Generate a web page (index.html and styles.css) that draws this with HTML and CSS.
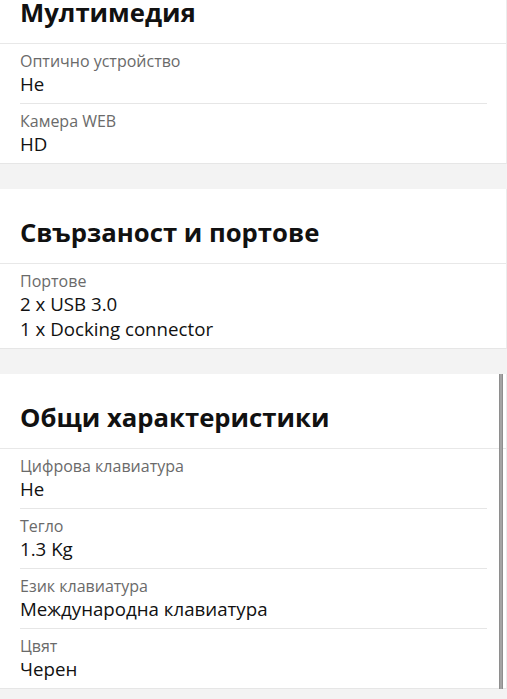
FILE: index.html
```html
<!DOCTYPE html>
<html lang="bg">
<head>
<meta charset="utf-8">
<title>Характеристики</title>
<link rel="stylesheet" href="styles.css">
</head>
<body>
<div class="specs">
  <section class="group">
    <h2 class="group-title">Мултимедия</h2>
    <div class="rows">
      <div class="row">
        <div class="label">Оптично устройство</div>
        <div class="value">Не</div>
      </div>
      <div class="row">
        <div class="label">Камера WEB</div>
        <div class="value">HD</div>
      </div>
    </div>
  </section>
  <section class="group">
    <h2 class="group-title">Свързаност и портове</h2>
    <div class="rows">
      <div class="row">
        <div class="label">Портове</div>
        <div class="value">2 x USB 3.0<br>1 x Docking connector</div>
      </div>
    </div>
  </section>
  <section class="group group-scroll">
    <h2 class="group-title">Общи характеристики</h2>
    <div class="rows">
      <div class="row">
        <div class="label">Цифрова клавиатура</div>
        <div class="value">Не</div>
      </div>
      <div class="row">
        <div class="label">Тегло</div>
        <div class="value">1.3 Kg</div>
      </div>
      <div class="row">
        <div class="label">Език клавиатура</div>
        <div class="value">Международна клавиатура</div>
      </div>
      <div class="row">
        <div class="label">Цвят</div>
        <div class="value">Черен</div>
      </div>
    </div>
    <div class="scroll-thumb"></div>
  </section>
</div>
</body>
</html>
```

FILE: styles.css
```css
* { box-sizing: border-box; }

html, body {
  margin: 0;
  padding: 0;
}

body {
  background: #f3f3f3;
  font-family: "Open Sans", "Noto Sans", sans-serif;
  color: #111;
  overflow: hidden;
}

.specs {
  display: flex;
  flex-direction: column;
  gap: 25px;
  margin-top: -31px;
}

.group {
  background: #fff;
  border-bottom: 1px solid #e6e6e6;
  border-right: 1px solid #ececec;
}

.group-title {
  margin: 0;
  padding: 26px 20px 12px;
  font-size: 25.7px;
  line-height: 36px;
  font-weight: 700;
  color: #111;
  border-bottom: 1px solid #e8e8e8;
}

.rows {
  display: flex;
  flex-direction: column;
}

.row {
  margin: 0 19px 0 20px;
  padding: 7px 0 7px;
  border-bottom: 1px solid #e6e6e6;
}

.row:last-child {
  border-bottom: none;
}

.label {
  font-size: 16px;
  line-height: 20px;
  color: #6a6a6a;
}

.value {
  font-size: 18.7px;
  line-height: 25px;
  color: #111;
}

.group-scroll {
  position: relative;
}

.scroll-thumb {
  position: absolute;
  right: 3px;
  top: 0;
  bottom: -6px;
  width: 4px;
  background: #a4a4a4;
  border-left: 1px solid #8e8e8e;
  border-right: 1px solid #8e8e8e;
}
```
